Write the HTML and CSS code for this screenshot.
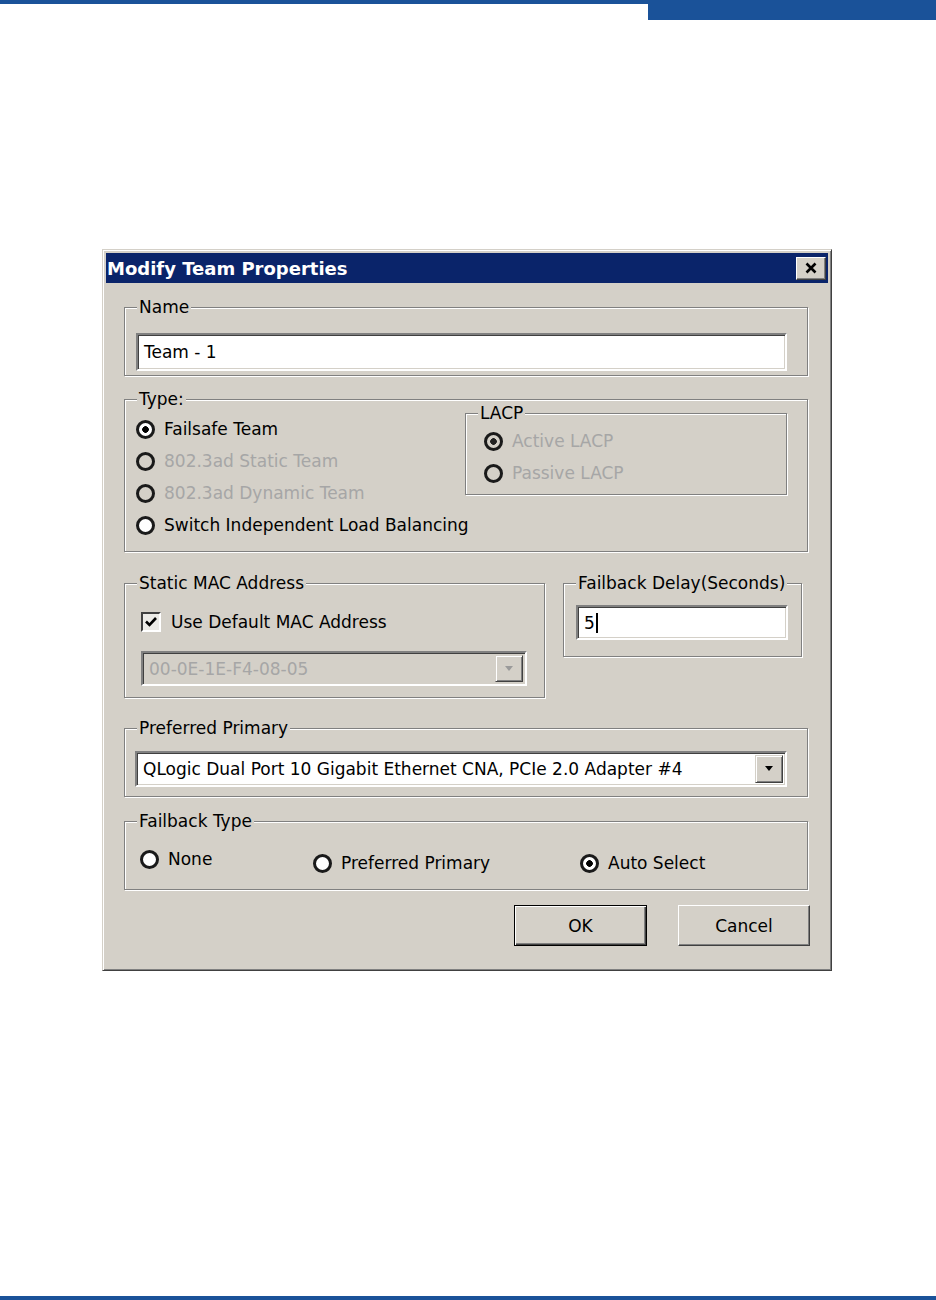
FILE: index.html
```html
<!DOCTYPE html>
<html lang="en">
<head>
    <meta charset="UTF-8">
    <title>Modify Team Properties</title>
    <link rel="stylesheet" href="styles.css">
</head>
<body>
<div class="page">
    <div class="topbar"><div class="topbar-tab"></div></div>

    <div class="dialog">
        <div class="titlebar">
            <span class="title">Modify Team Properties</span>
            <button class="close-btn" type="button">
                <svg width="14" height="12" viewBox="0 0 14 12"><path d="M2.5 1.5 L11.5 10.5 M11.5 1.5 L2.5 10.5" stroke="#000" stroke-width="2.6" fill="none"/></svg>
            </button>
        </div>

        <div class="dialog-body">
            <fieldset class="group group-name">
                <legend>Name</legend>
                <div class="group-body">
                    <div class="field field-tall">Team - 1</div>
                </div>
            </fieldset>

            <fieldset class="group group-type">
                <legend>Type:</legend>
                <div class="group-body">
                    <div class="radio-list">
                        <div class="radio-row"><span class="radio checked"></span>Failsafe Team</div>
                        <div class="radio-row disabled"><span class="radio"></span>802.3ad Static Team</div>
                        <div class="radio-row disabled"><span class="radio"></span>802.3ad Dynamic Team</div>
                        <div class="radio-row"><span class="radio"></span>Switch Independent Load Balancing</div>
                    </div>
                    <fieldset class="group group-lacp">
                        <legend>LACP</legend>
                        <div class="group-body">
                            <div class="radio-row disabled"><span class="radio checked"></span>Active LACP</div>
                            <div class="radio-row disabled"><span class="radio"></span>Passive LACP</div>
                        </div>
                    </fieldset>
                </div>
            </fieldset>

            <div class="group-row">
                <fieldset class="group group-mac">
                    <legend>Static MAC Address</legend>
                    <div class="group-body">
                        <div class="check-row">
                            <span class="checkbox">
                                <svg width="14" height="14" viewBox="0 0 14 14"><path d="M2 6.5 L5.5 10 L12 3" stroke="#000" stroke-width="2.6" fill="none"/></svg>
                            </span>
                            Use Default MAC Address
                        </div>
                        <div class="select disabled">
                            <span class="select-text">00-0E-1E-F4-08-05</span>
                            <span class="select-btn">
                                <svg width="10" height="6" viewBox="0 0 10 6"><path d="M1 0 H9 L5 5 Z" fill="#9a9a9a"/></svg>
                            </span>
                        </div>
                    </div>
                </fieldset>

                <fieldset class="group group-delay">
                    <legend>Failback Delay(Seconds)</legend>
                    <div class="group-body">
                        <div class="field">5<span class="caret"></span></div>
                    </div>
                </fieldset>
            </div>

            <fieldset class="group group-primary">
                <legend>Preferred Primary</legend>
                <div class="group-body">
                    <div class="select">
                        <span class="select-text">QLogic Dual Port 10 Gigabit Ethernet CNA, PCIe 2.0 Adapter #4</span>
                        <span class="select-btn">
                            <svg width="10" height="6" viewBox="0 0 10 6"><path d="M1 0 H9 L5 5 Z" fill="#000"/></svg>
                        </span>
                    </div>
                </div>
            </fieldset>

            <fieldset class="group group-failback">
                <legend>Failback Type</legend>
                <div class="group-body">
                    <div class="radio-row"><span class="radio"></span>None</div>
                    <div class="radio-row low"><span class="radio"></span>Preferred Primary</div>
                    <div class="radio-row low"><span class="radio checked"></span>Auto Select</div>
                </div>
            </fieldset>

            <div class="buttons">
                <button class="btn btn-default" type="button">OK</button>
                <button class="btn" type="button">Cancel</button>
            </div>
        </div>
    </div>

    <div class="bottombar"></div>
</div>
</body>
</html>
```

FILE: styles.css
```css
* {
    margin: 0;
    padding: 0;
    box-sizing: border-box;
}

body {
    background: #fff;
    font-family: "DejaVu Sans", sans-serif;
    font-size: 17px;
    color: #000;
}

.page {
    min-height: 1300px;
    display: flex;
    flex-direction: column;
}

/* Page chrome */
.topbar {
    border-top: 4px solid #1a5299;
    display: flex;
    justify-content: flex-end;
}

.topbar-tab {
    width: 288px;
    height: 16px;
    background: #1a5299;
}

.bottombar {
    margin-top: auto;
    height: 4px;
    background: #1a5299;
}

/* Dialog window */
.dialog {
    margin: 229px 0 0 102px;
    width: 730px;
    padding: 3px;
    background: #d4d0c8;
    border: 1px solid;
    border-color: #d4d0c8 #404040 #404040 #d4d0c8;
    box-shadow: inset 1px 1px 0 #fff, inset -1px -1px 0 #808080;
}

.titlebar {
    height: 30px;
    background: #0a246a;
    display: flex;
    align-items: center;
    justify-content: space-between;
    padding: 0 2px 0 1px;
}

.title {
    color: #fff;
    font-weight: bold;
    font-size: 18px;
}

.close-btn {
    width: 30px;
    height: 23px;
    background: #d4d0c8;
    border: 1px solid;
    border-color: #fff #404040 #404040 #fff;
    box-shadow: inset -1px -1px 0 #808080;
    display: flex;
    align-items: center;
    justify-content: center;
}

.dialog-body {
    padding: 14px 20px 21px 18px;
    display: flex;
    flex-direction: column;
}

/* Group boxes */
.group {
    border: 1px solid #808080;
    box-shadow: inset 1px 1px 0 #fff, 1px 1px 0 #fff;
    min-width: 0;
}

.group legend {
    margin-left: 12px;
    padding: 0 2px;
    line-height: 20px;
    background: #d4d0c8;
}

.group-name .group-body {
    padding: 16px 20px 4px 11px;
}

.group-type {
    margin-top: 13px;
}

.group-type > .group-body {
    display: flex;
    align-items: flex-start;
    padding: 4px 20px 10px 11px;
}

.radio-list {
    flex: 1;
    min-width: 0;
}

.group-lacp {
    width: 322px;
    flex: none;
    margin-top: -10px;
}

.group-lacp .group-body {
    padding: 2px 10px 5px 18px;
}

.group-row {
    margin-top: 21px;
    display: flex;
    align-items: flex-start;
    gap: 18px;
}

.group-mac {
    width: 421px;
}

.group-mac .group-body {
    padding: 15px 17px 11px 16px;
}

.group-delay {
    width: 239px;
}

.group-delay .group-body {
    padding: 12px 13px 16px 12px;
}

.group-primary {
    margin-top: 20px;
}

.group-primary .group-body {
    padding: 13px 20px 9px 10px;
}

.group-failback {
    margin-top: 14px;
}

.group-failback .group-body {
    display: grid;
    grid-template-columns: 173px 267px auto;
    align-items: start;
    padding: 14px 0 12px 15px;
}

/* Radios and checkbox */
.radio-row {
    height: 32px;
    display: flex;
    align-items: center;
    gap: 9px;
    white-space: nowrap;
}

.group-failback .radio-row {
    height: 28px;
}

.group-failback .radio-row.low {
    margin-top: 4px;
}

.radio {
    width: 19px;
    height: 19px;
    flex: none;
    border: 3px solid #1a1a1a;
    border-radius: 50%;
    background: #fff;
}

.radio.checked {
    background: radial-gradient(circle, #000 0 3px, #fff 3.6px);
}

.disabled {
    color: #a6a6a6;
}

.radio-row.disabled .radio {
    background: #d4d0c8;
}

.radio-row.disabled .radio.checked {
    background: radial-gradient(circle, #222 0 3px, #d4d0c8 3.6px);
}

.check-row {
    height: 28px;
    display: flex;
    align-items: center;
    gap: 10px;
}

.checkbox {
    width: 20px;
    height: 20px;
    border: 2px solid;
    border-color: #404040 #fff #fff #404040;
    background: #ecebe7;
    display: flex;
    align-items: center;
    justify-content: center;
}

/* Text fields and drop-downs */
.field {
    height: 35px;
    background: #fff;
    border: 2px solid;
    border-color: #808080 #fff #fff #808080;
    box-shadow: inset 1px 1px 0 #404040, inset -1px -1px 0 #d4d0c8;
    padding-left: 6px;
    display: flex;
    align-items: center;
}

.field-tall {
    height: 38px;
}

.caret {
    width: 2px;
    height: 20px;
    margin-left: 1px;
    background: #000;
}

.select {
    height: 36px;
    background: #fff;
    border: 2px solid;
    border-color: #808080 #fff #fff #808080;
    box-shadow: inset 1px 1px 0 #404040, inset -1px -1px 0 #d4d0c8;
    display: flex;
    align-items: center;
    padding: 2px;
}

.group-mac .select {
    height: 35px;
    margin-top: 15px;
}

.select.disabled {
    background: #d4d0c8;
}

.select-text {
    flex: 1;
    padding-left: 4px;
    white-space: nowrap;
    overflow: hidden;
}

.select-btn {
    width: 28px;
    height: 100%;
    background: #d4d0c8;
    border: 1px solid;
    border-color: #d4d0c8 #404040 #404040 #d4d0c8;
    box-shadow: inset 1px 1px 0 #fff, inset -1px -1px 0 #808080;
    display: flex;
    align-items: center;
    justify-content: center;
}

/* Dialog buttons */
.buttons {
    margin: 15px -2px 0 0;
    display: flex;
    justify-content: flex-end;
    gap: 31px;
}

.btn {
    width: 132px;
    height: 41px;
    font: inherit;
    color: #000;
    background: #d4d0c8;
    border: 1px solid;
    border-color: #fff #404040 #404040 #fff;
    box-shadow: inset -1px -1px 0 #808080;
}

.btn-default {
    width: 133px;
    border-color: #000;
    box-shadow: inset 1px 1px 0 #fff, inset -1px -1px 0 #404040, inset -2px -2px 0 #808080;
}
```
